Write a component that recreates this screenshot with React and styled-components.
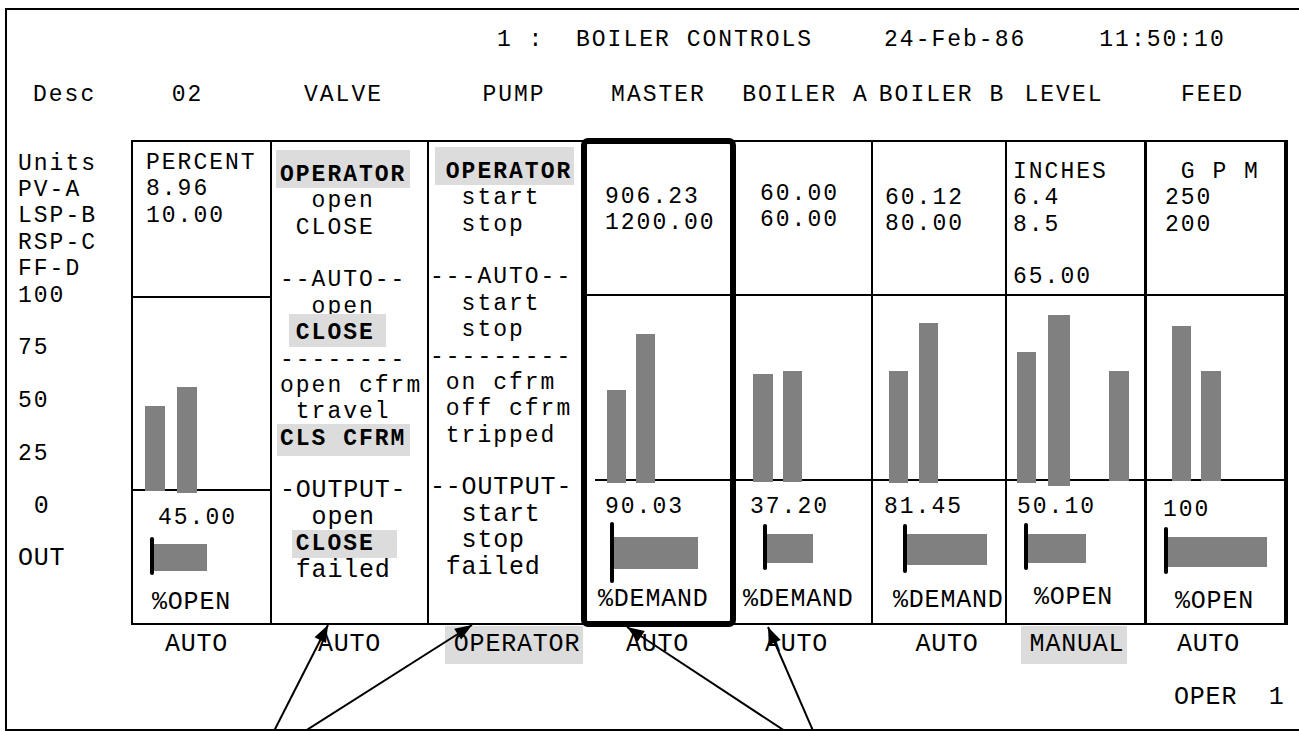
import React from 'react'
import styled, { createGlobalStyle, css } from 'styled-components'

const MONO = `"Liberation Mono", "Courier New", monospace`
const GRID = '124px 141px 157px 156px 147px 141px 134px 140px 139px'

const GlobalStyle = createGlobalStyle`
    html, body {
        margin: 0;
        padding: 0;
        background: #fff;
    }
    body {
        width: 1299px;
        height: 731px;
        overflow: hidden;
    }
`

const Frame = styled.div`
    position: relative;
    box-sizing: content-box;
    margin: 8px 0 0 5px;
    width: 1310px;
    height: 719px;
    border: 2px solid #000;
    border-right: none;
    font-family: ${MONO};
    font-size: 23px;
    letter-spacing: 2px;
    color: #000;
`

const TitleBar = styled.div`
    display: flex;
    align-items: center;
    height: 60px;
    padding-left: 490px;
    white-space: pre;
`

const TitlePart = styled.span`
    margin-left: ${p => p.$gap || 0}px;
`

const HeaderRow = styled.div`
    display: grid;
    grid-template-columns: ${GRID};
    align-items: center;
    height: 50px;
    margin-bottom: 20px;
    white-space: pre;
`

const HeadCell = styled.div`
    text-align: ${p => (p.$left ? 'left' : 'center')};
    padding-left: ${p => (p.$left ? p.$left : Math.max(0, (p.$off || 0) * 2))}px;
    padding-right: ${p => Math.max(0, -(p.$off || 0) * 2)}px;
`

const Body = styled.div`
    display: flex;
    align-items: flex-start;
`

const Scale = styled.div`
    width: 124px;
    box-sizing: border-box;
    padding: 10.6px 0 0 11px;
    white-space: pre;
`

const Line = styled.div`
    height: 26.4px;
    line-height: 26.4px;
    ${p => p.$tall && css`
        font-size: 25px;
        letter-spacing: 0.8px;
    `}
`

const Table = styled.div`
    display: grid;
    grid-template-columns: 139px 157px 156px 147px 141px 134px 140px 139px;
    box-sizing: content-box;
    height: 481px;
    border: 2px solid #000;
`

const Cell = styled.div`
    position: relative;
    display: flex;
    flex-direction: column;
    box-sizing: border-box;
    min-width: 0;
    border-right: ${p => p.$edge || 2}px solid #000;
    ${p => p.$hot && css`
        outline: 6px solid #000;
        outline-offset: -2px;
        border-radius: 3px;
        z-index: 1;
    `}
`

const Readout = styled.div`
    flex: none;
    box-sizing: border-box;
    height: ${p => p.$h}px;
    padding: ${p => p.$top}px 0 0 ${p => p.$left}px;
    border-bottom: 2px solid #000;
    white-space: pre;
`

const Plot = styled.svg`
    display: block;
    flex: none;
    overflow: visible;
`

const Tail = styled.div`
    flex: 1;
    display: flex;
    flex-direction: column;
    padding-top: ${p => p.$top}px;
    white-space: pre;
`

const Value = styled.div`
    height: 26px;
    line-height: 26px;
    padding-left: ${p => p.$x}px;
`

const Unit = styled.div`
    height: 26px;
    line-height: 26px;
    padding-left: ${p => p.$x}px;
    font-size: 25px;
    letter-spacing: 0.8px;
`

const Script = styled.div`
    padding: ${p => p.$top}px 0 0 ${p => p.$left}px;
    white-space: pre;
`

// highlighted word: the grey box grows left by its padding, the text stays put
const Mark = styled.span`
    font-weight: bold;
    font-size: 23px;
    letter-spacing: 2px;
    background: #dcdcdc;
    padding: ${p => p.$pad[0]}px ${p => p.$pad[1]}px ${p => p.$pad[2]}px ${p => p.$pad[3]}px;
    margin-left: ${p => -p.$pad[3]}px;
`

const ModeRow = styled.div`
    display: grid;
    grid-template-columns: ${GRID};
    margin-top: 7px;
    height: 26.4px;
    line-height: 26.4px;
    font-size: 25px;
    letter-spacing: 0.8px;
    white-space: pre;
`

const Mode = styled.div`
    text-align: center;
    padding-left: ${p => Math.max(0, (p.$off || 0) * 2)}px;
    padding-right: ${p => Math.max(0, -(p.$off || 0) * 2)}px;
`

const ModeTag = styled.span`
    background: ${p => (p.$hl ? '#dcdcdc' : 'transparent')};
    padding: 4px ${p => (p.$hl ? '3px' : '0')} 5px ${p => (p.$hl ? '9px' : '0')};
`

const Footer = styled.div`
    margin-top: 26.6px;
    padding-left: 1167px;
    height: 26.4px;
    line-height: 26.4px;
    font-size: 25px;
    letter-spacing: 0.8px;
    white-space: pre;
`

const Overlay = styled.svg`
    position: absolute;
    left: -7px;
    top: -10px;
    pointer-events: none;
    z-index: 2;
`

const scaleRows = [
    ['Units'], ['PV-A'], ['LSP-B'], ['RSP-C'], ['FF-D'], ['100'], [''], ['75'], [''],
    ['50'], [''], ['25'], [''], [' 0', true], [''], ['OUT', true],
]

// t = tall glyphs, m = highlighted bold word, pad = [top, right, bottom, left]
const valveRows = [
    { m: 'OPERATOR', pad: [12, 4, 0, 4] },
    { s: '  open' },
    { s: ' CLOSE' },
    { s: '' },
    { s: '--AUTO--' },
    { s: '  open' },
    { s: ' ', m: 'CLOSE', pad: [6, 11, 1, 7] },
    { s: '--------' },
    { s: 'open cfrm' },
    { s: ' travel' },
    { m: 'CLS CFRM', pad: [2, 4, 4, 3] },
    { s: '' },
    { s: '-OUTPUT-', t: true },
    { s: '  open', t: true },
    { s: ' ', m: 'CLOSE', pad: [1, 22, 1, 4] },
    { s: ' failed', t: true },
]

const pumpRows = [
    { s: ' ', m: 'OPERATOR', pad: [12, 2, 0, 11] },
    { s: '  start' },
    { s: '  stop' },
    { s: '' },
    { s: '---AUTO--' },
    { s: '  start' },
    { s: '  stop' },
    { s: '---------' },
    { s: ' on cfrm' },
    { s: ' off cfrm' },
    { s: ' tripped' },
    { s: '' },
    { s: '--OUTPUT-', t: true },
    { s: '  start', t: true },
    { s: '  stop', t: true },
    { s: ' failed', t: true },
]

const cells = [
    {
        id: '02', x: 133, w: 139, topH: 156, topPad: 7.8, topX: 13,
        top: ['PERCENT', '8.96', '10.00'],
        chartY: 298, chartH: 193, lineFrom: 133,
        bars: [[145, 165, 406, 491], [177, 197, 387, 493]],
        out: { sy: 491, valueY: 518, valueX: 25, value: '45.00', unitY: 603, unitX: 19, unit: '%OPEN', tick: [150, 154, 537, 575], bar: [154, 207, 544, 571] },
    },
    { id: 'VALVE', x: 272, w: 157, script: valveRows, scriptTop: 19.8, scriptLeft: 8 },
    { id: 'PUMP', x: 429, w: 156, script: pumpRows, scriptTop: 16.8, scriptLeft: 1 },
    {
        id: 'MASTER', x: 585, w: 147, hot: true, topH: 154, topPad: 41.8, topX: 20,
        top: ['906.23', '1200.00'],
        chartY: 296, chartH: 185, lineFrom: 595,
        bars: [[607, 626, 390, 483], [636, 655, 334, 483]],
        out: { sy: 481, valueY: 507, valueX: 20, value: '90.03', unitY: 600, unitX: 13, unit: '%DEMAND', tick: [610, 614, 522, 583], bar: [614, 698, 537, 569] },
    },
    {
        id: 'BOILER A', x: 732, w: 141, topH: 154, topPad: 38.8, topX: 28,
        top: ['60.00', '60.00'],
        chartY: 296, chartH: 185, lineFrom: 732,
        bars: [[753, 773, 374, 482], [783, 802, 371, 482]],
        out: { sy: 481, valueY: 507, valueX: 18, value: '37.20', unitY: 600, unitX: 11, unit: '%DEMAND', tick: [763, 767, 524, 570], bar: [767, 813, 534, 563] },
    },
    {
        id: 'BOILER B', x: 873, w: 134, topH: 154, topPad: 42.8, topX: 12,
        top: ['60.12', '80.00'],
        chartY: 296, chartH: 185, lineFrom: 873,
        bars: [[889, 908, 371, 483], [919, 938, 323, 483]],
        out: { sy: 481, valueY: 507, valueX: 11, value: '81.45', unitY: 601, unitX: 20, unit: '%DEMAND', tick: [903, 907, 524, 573], bar: [907, 987, 534, 565] },
    },
    {
        id: 'LEVEL', x: 1007, w: 140, edge: 3, topH: 154, topPad: 16.8, topX: 6,
        top: ['INCHES', '6.4', '8.5', '', '65.00'],
        chartY: 296, chartH: 185, lineFrom: 1007,
        bars: [[1017, 1036, 352, 483], [1048, 1070, 315, 486], [1109, 1129, 371, 481]],
        out: { sy: 481, valueY: 507, valueX: 10, value: '50.10', unitY: 598, unitX: 27, unit: '%OPEN', tick: [1024, 1028, 523, 570], bar: [1028, 1086, 534, 563] },
    },
    {
        id: 'FEED', x: 1147, w: 139, topH: 154, topPad: 16.8, topX: 18,
        top: [' G P M', '250', '200'],
        chartY: 296, chartH: 185, lineFrom: 1147,
        bars: [[1172, 1191, 326, 481], [1201, 1221, 371, 481]],
        out: { sy: 481, valueY: 510, valueX: 16, value: '100', unitY: 602, unitX: 28, unit: '%OPEN', tick: [1164, 1168, 527, 574], bar: [1168, 1267, 537, 567] },
    },
]

const heads = [
    { text: 'Desc', left: 26 },
    { text: '02', off: -14 },
    { text: 'VALVE', off: -7 },
    { text: 'PUMP', off: 7 },
    { text: 'MASTER' },
    { text: 'BOILER A', off: 3 },
    { text: 'BOILER B', off: 2 },
    { text: 'LEVEL', off: -13 },
    { text: 'FEED', off: -4 },
]

const modes = [
    { text: '' },
    { text: 'AUTO', off: -5 },
    { text: 'AUTO', off: -1 },
    { text: 'OPERATOR', off: 7, hl: true },
    { text: 'AUTO', off: -1 },
    { text: 'AUTO', off: -6 },
    { text: 'AUTO', off: 7 },
    { text: 'MANUAL', off: -3, hl: true },
    { text: 'AUTO', off: -8 },
]

const arrows = [
    [273, 733, 328, 625],
    [302, 733, 472, 625],
    [788, 733, 627, 627],
    [814, 733, 768, 627],
]

const head = (x1, y1, x2, y2, len = 17, half = 6.5) => {
    const dx = x2 - x1
    const dy = y2 - y1
    const l = Math.hypot(dx, dy)
    const ux = dx / l
    const uy = dy / l
    const bx = x2 - ux * len
    const by = y2 - uy * len
    return `${x2},${y2} ${bx - uy * half},${by + ux * half} ${bx + uy * half},${by - ux * half}`
}

const Chart = ({ c }) => {
    const width = c.w - (c.edge || 2)
    return (
        <Plot width={width} height={c.chartH}>
            <rect x={c.lineFrom - c.x} y={c.chartH - 2} width={width - (c.lineFrom - c.x)} height={2} fill="#000" />
            {c.bars.map(([a, b, t, bt], i) => (
                <rect key={i} x={a - c.x} y={t - c.chartY} width={b - a} height={bt - t} fill="#808080" />
            ))}
        </Plot>
    )
}

const Output = ({ c }) => {
    const o = c.out
    const svgTop = o.valueY + 13
    const svgH = o.unitY - 13 - svgTop
    const width = c.w - (c.edge || 2)
    return (
        <Tail $top={o.valueY - 13 - o.sy}>
            <Value $x={o.valueX}>{o.value}</Value>
            <Plot width={width} height={svgH}>
                <rect x={o.bar[0] - c.x} y={o.bar[2] - svgTop} width={o.bar[1] - o.bar[0]} height={o.bar[3] - o.bar[2]} fill="#808080" />
                <rect x={o.tick[0] - c.x} y={o.tick[2] - svgTop} width={o.tick[1] - o.tick[0]} height={o.tick[3] - o.tick[2]} rx="2" fill="#000" />
            </Plot>
            <Unit $x={o.unitX}>{o.unit}</Unit>
        </Tail>
    )
}

const Column = ({ c }) => {
    if (c.script) {
        return (
            <Cell $edge={c.edge}>
                <Script $top={c.scriptTop} $left={c.scriptLeft}>
                    {c.script.map((r, i) => (
                        <Line key={i} $tall={r.t}>
                            {r.s}
                            {r.m && <Mark $pad={r.pad}>{r.m}</Mark>}
                        </Line>
                    ))}
                </Script>
            </Cell>
        )
    }
    return (
        <Cell $edge={c.edge} $hot={c.hot}>
            <Readout $h={c.topH} $top={c.topPad} $left={c.topX}>
                {c.top.map((t, i) => <Line key={i}>{t}</Line>)}
            </Readout>
            <Chart c={c} />
            <Output c={c} />
        </Cell>
    )
}

const App = () => {
    return (
        <>
            <GlobalStyle />
            <Frame>
                <TitleBar>
                    <TitlePart>1 :  BOILER CONTROLS</TitlePart>
                    <TitlePart $gap={71}>24-Feb-86</TitlePart>
                    <TitlePart $gap={73}>11:50:10</TitlePart>
                </TitleBar>
                <HeaderRow>
                    {heads.map((h, i) => (
                        <HeadCell key={i} $left={h.left} $off={h.off}>{h.text}</HeadCell>
                    ))}
                </HeaderRow>
                <Body>
                    <Scale>
                        {scaleRows.map(([t, tall], i) => <Line key={i} $tall={tall}>{t}</Line>)}
                    </Scale>
                    <Table>
                        {cells.map(c => <Column key={c.id} c={c} />)}
                    </Table>
                </Body>
                <ModeRow>
                    {modes.map((m, i) => (
                        <Mode key={i} $off={m.off}>
                            <ModeTag $hl={m.hl}>{m.text}</ModeTag>
                        </Mode>
                    ))}
                </ModeRow>
                <Footer>OPER  1</Footer>
                <Overlay width="1299" height="731">
                    {arrows.map(([x1, y1, x2, y2], i) => (
                        <g key={i}>
                            <line x1={x1} y1={y1} x2={x2} y2={y2} stroke="#000" strokeWidth="2" />
                            <polygon points={head(x1, y1, x2, y2)} fill="#000" />
                        </g>
                    ))}
                </Overlay>
            </Frame>
        </>
    )
}

export default App
